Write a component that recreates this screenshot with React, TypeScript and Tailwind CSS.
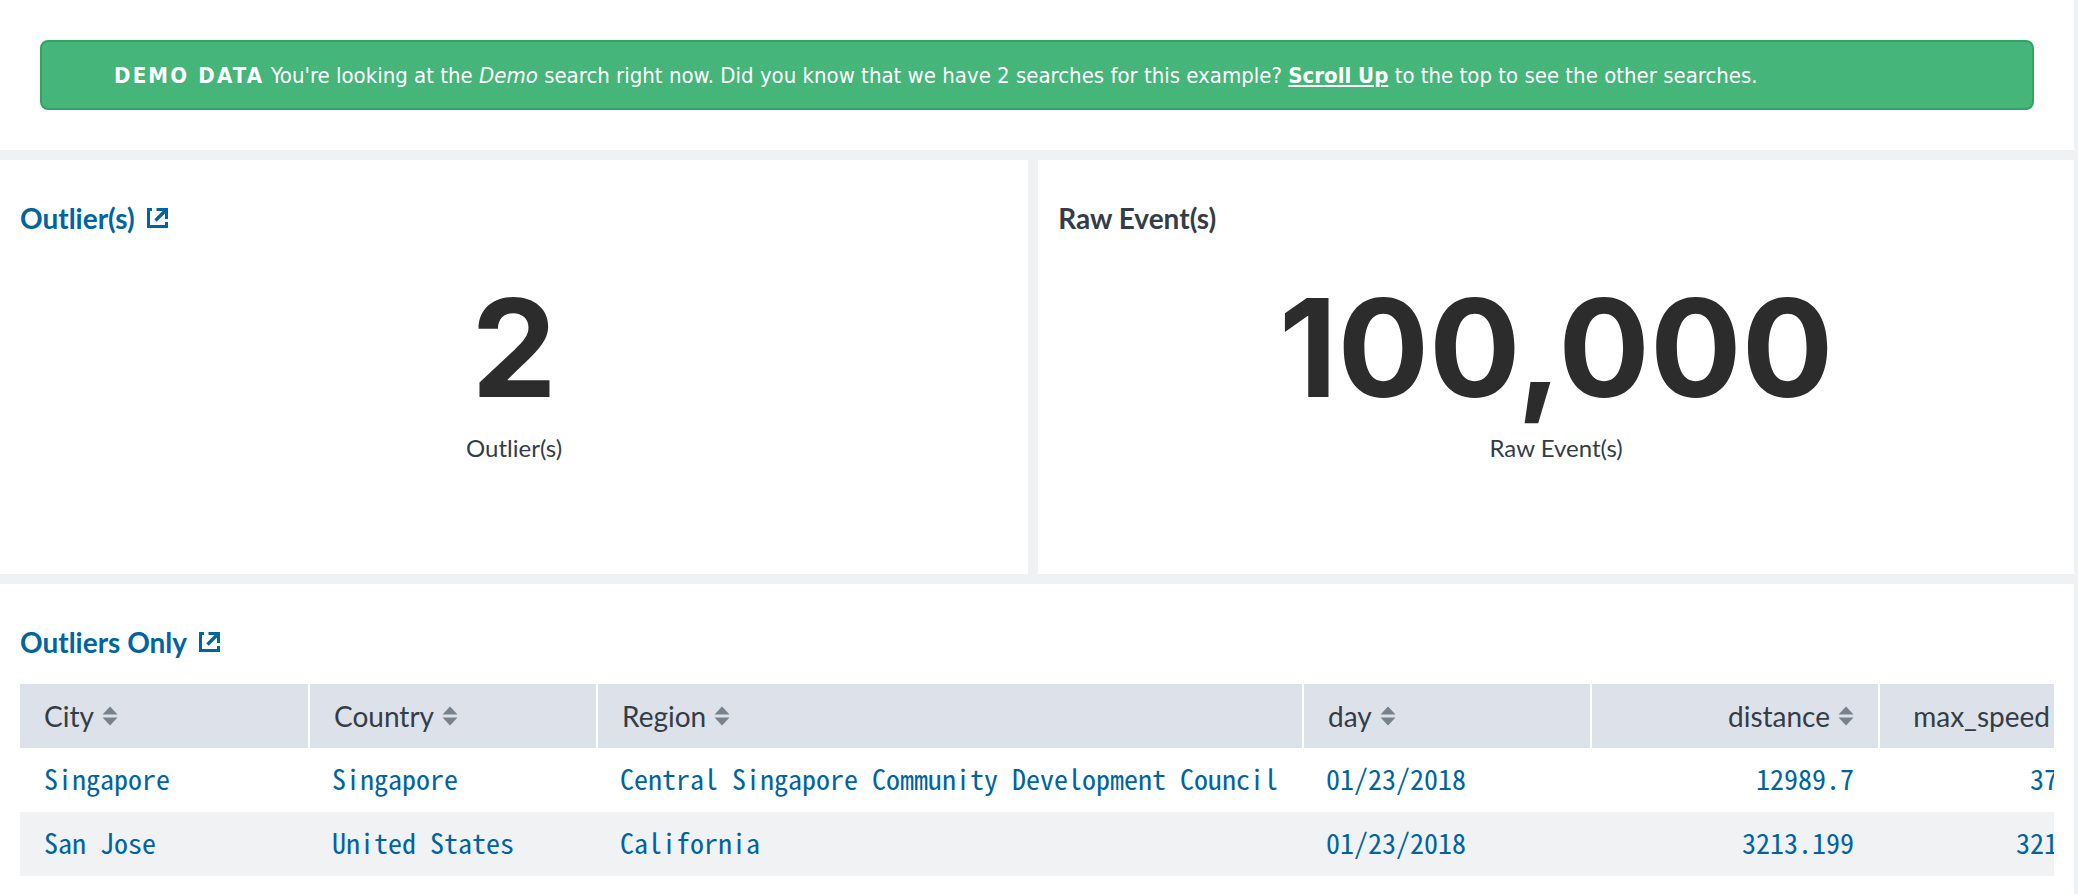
function ExternalIcon() {
  return (
    <svg viewBox="0 0 21 20" className="h-5 w-[21px]" fill="none" stroke="currentColor" strokeWidth="3" aria-hidden="true">
      <path d="M5 1.5H1.5V18.5H19.5V14" />
      <path d="M9.5 1.5H19.5V11" />
      <path d="M19 2L8.5 12.5" strokeWidth="3.4" />
    </svg>
  );
}

function SortIcon() {
  return (
    <svg viewBox="0 0 16 20" className="h-5 w-4 text-[#77828d]" fill="currentColor" aria-hidden="true">
      <path d="M8 0.5L15.5 8.5H0.5Z" />
      <path d="M8 19.5L15.5 11.5H0.5Z" />
    </svg>
  );
}

type Column = { label: string; width: string; numeric?: boolean; last?: boolean };

const columns: Column[] = [
  { label: "City", width: "w-[288px]" },
  { label: "Country", width: "w-[288px]" },
  { label: "Region", width: "w-[706px]" },
  { label: "day", width: "w-[288px]" },
  { label: "distance", width: "w-[288px]", numeric: true },
  { label: "max_speed", width: "w-[220px]", numeric: true, last: true },
];

const rows = [
  ["Singapore", "Singapore", "Central Singapore Community Development Council", "01/23/2018", "12989.7", "37"],
  ["San Jose", "United States", "California", "01/23/2018", "3213.199", "321"],
];

function SingleValue({ value, label }: { value: string; label: string }) {
  return (
    <div className="flex flex-col items-center gap-2">
      <p className="font-['Inter',sans-serif] text-[136px] leading-[152px] font-bold text-[#2c2c2c]">{value}</p>
      <p className="text-[24px] leading-8 text-[#333d47]">{label}</p>
    </div>
  );
}

export default function App() {
  return (
    <main className="flex min-h-screen flex-col gap-2.5 bg-[#f0f1f3] pr-1 font-['Lato',sans-serif] text-[#333d47]">
      <section className="bg-white p-10">
        <div
          role="status"
          className="rounded-lg border-2 border-[#31a366] bg-[#45b57a] pt-[18px] pr-6 pb-4 pl-[72px] font-['DejaVu_Sans_Condensed','DejaVu_Sans',sans-serif] text-[22px] leading-8 text-white"
        >
          <strong className="tracking-widest">DEMO DATA</strong> You're looking at the <em>Demo</em> search right now. Did
          you know that we have 2 searches for this example?{" "}
          <a href="#top" className="font-bold underline">
            Scroll Up
          </a>{" "}
          to the top to see the other searches.
        </div>
      </section>

      <div className="flex gap-2.5">
        <section className="min-h-[414px] flex-[1028_1_0%] bg-white px-5 pt-10">
          <h2 className="mb-9 text-[28px] leading-9 font-bold">
            <a href="#outliers" className="inline-flex items-center gap-3 text-[#0064a0]">
              Outlier(s) <ExternalIcon />
            </a>
          </h2>
          <SingleValue value="2" label="Outlier(s)" />
        </section>
        <section className="min-h-[414px] flex-[1036_1_0%] bg-white px-5 pt-10">
          <h2 className="mb-9 text-[28px] leading-9 font-bold">Raw Event(s)</h2>
          <SingleValue value="100,000" label="Raw Event(s)" />
        </section>
      </div>

      <section className="grow bg-white px-5 pt-10">
        <h2 className="mb-6 text-[28px] leading-9 font-bold">
          <a href="#outliers-only" className="inline-flex items-center gap-3 text-[#0064a0]">
            Outliers Only <ExternalIcon />
          </a>
        </h2>
        <div className="overflow-hidden">
          <table className="w-[2078px] table-fixed border-separate border-spacing-0">
            <thead>
              <tr className="h-16 bg-[#dde1e9]">
                {columns.map((c, i) => (
                  <th
                    key={c.label}
                    scope="col"
                    className={`${c.width} ${i > 0 ? "border-l-2 border-white" : ""} px-6 text-[28px] font-normal`}
                  >
                    <button type="button" className={`flex w-full items-center gap-2 ${c.numeric ? "justify-end" : ""}`}>
                      {c.label} <SortIcon />
                    </button>
                  </th>
                ))}
              </tr>
            </thead>
            <tbody className="font-['Noto_Sans_Mono_CJK_SC','Liberation_Mono',monospace] text-[28px] leading-10">
              {rows.map((row) => (
                <tr key={row[0]} className="h-16 even:bg-[#f0f2f4]">
                  {row.map((cell, i) => (
                    <td
                      key={columns[i].label}
                      className={`whitespace-nowrap pb-1 pl-6 ${columns[i].last ? "pr-10" : "pr-6"} ${columns[i].numeric ? "text-right" : ""}`}
                    >
                      <a href="#drilldown" className="text-[#0064a0]">
                        {cell}
                      </a>
                    </td>
                  ))}
                </tr>
              ))}
            </tbody>
          </table>
        </div>
      </section>
    </main>
  );
}
